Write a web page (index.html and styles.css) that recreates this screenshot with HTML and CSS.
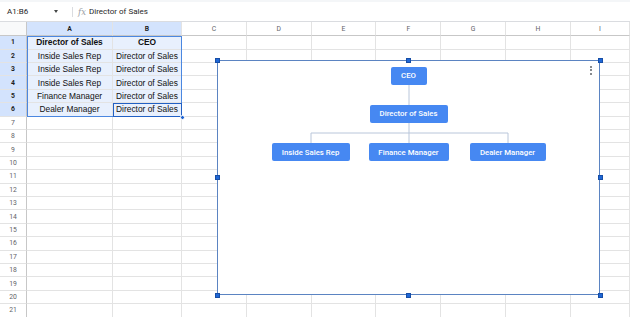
FILE: index.html
```html
<!DOCTYPE html>
<html>
<head>
<meta charset="utf-8">
<link rel="stylesheet" href="styles.css">
</head>
<body>
<div class="app">
  <div class="fbar">
    <div class="namebox"><span class="nb-text">A1:B6</span><span class="caret"></span></div>
    <div class="sep"></div>
    <span class="fx">fx</span>
    <span class="formula">Director of Sales</span>
  </div>
  <div class="sheet">
    <div class="row head"><i class="corner"></i><i class="sel">A</i><i class="sel">B</i><i>C</i><i>D</i><i>E</i><i>F</i><i>G</i><i>H</i><i>I</i></div>
    <div class="row"><i class="rh sel">1</i><i class="s b">Director of Sales</i><i class="s b">CEO</i><i></i><i></i><i></i><i></i><i></i><i></i><i></i></div>
    <div class="row"><i class="rh sel">2</i><i class="s">Inside Sales Rep</i><i class="s">Director of Sales</i><i></i><i></i><i></i><i></i><i></i><i></i><i></i></div>
    <div class="row"><i class="rh sel">3</i><i class="s">Inside Sales Rep</i><i class="s">Director of Sales</i><i></i><i></i><i></i><i></i><i></i><i></i><i></i></div>
    <div class="row"><i class="rh sel">4</i><i class="s">Inside Sales Rep</i><i class="s">Director of Sales</i><i></i><i></i><i></i><i></i><i></i><i></i><i></i></div>
    <div class="row"><i class="rh sel">5</i><i class="s">Finance Manager</i><i class="s">Director of Sales</i><i></i><i></i><i></i><i></i><i></i><i></i><i></i></div>
    <div class="row"><i class="rh sel">6</i><i class="s">Dealer Manager</i><i class="s">Director of Sales</i><i></i><i></i><i></i><i></i><i></i><i></i><i></i></div>
    <div class="row"><i class="rh">7</i><i></i><i></i><i></i><i></i><i></i><i></i><i></i><i></i><i></i></div>
    <div class="row"><i class="rh">8</i><i></i><i></i><i></i><i></i><i></i><i></i><i></i><i></i><i></i></div>
    <div class="row"><i class="rh">9</i><i></i><i></i><i></i><i></i><i></i><i></i><i></i><i></i><i></i></div>
    <div class="row"><i class="rh">10</i><i></i><i></i><i></i><i></i><i></i><i></i><i></i><i></i><i></i></div>
    <div class="row"><i class="rh">11</i><i></i><i></i><i></i><i></i><i></i><i></i><i></i><i></i><i></i></div>
    <div class="row"><i class="rh">12</i><i></i><i></i><i></i><i></i><i></i><i></i><i></i><i></i><i></i></div>
    <div class="row"><i class="rh">13</i><i></i><i></i><i></i><i></i><i></i><i></i><i></i><i></i><i></i></div>
    <div class="row"><i class="rh">14</i><i></i><i></i><i></i><i></i><i></i><i></i><i></i><i></i><i></i></div>
    <div class="row"><i class="rh">15</i><i></i><i></i><i></i><i></i><i></i><i></i><i></i><i></i><i></i></div>
    <div class="row"><i class="rh">16</i><i></i><i></i><i></i><i></i><i></i><i></i><i></i><i></i><i></i></div>
    <div class="row"><i class="rh">17</i><i></i><i></i><i></i><i></i><i></i><i></i><i></i><i></i><i></i></div>
    <div class="row"><i class="rh">18</i><i></i><i></i><i></i><i></i><i></i><i></i><i></i><i></i><i></i></div>
    <div class="row"><i class="rh">19</i><i></i><i></i><i></i><i></i><i></i><i></i><i></i><i></i><i></i></div>
    <div class="row"><i class="rh">20</i><i></i><i></i><i></i><i></i><i></i><i></i><i></i><i></i><i></i></div>
    <div class="row"><i class="rh">21</i><i></i><i></i><i></i><i></i><i></i><i></i><i></i><i></i><i></i></div>

    <div class="range"></div>
    <div class="active"><span class="fill-handle"></span></div>

    <div class="chart">
      <svg class="links" width="383" height="235" viewBox="0 0 383 235">
        <path d="M192 24 V45 M192 63 V73 M94 73 H291 M94 73 V83 M192 73 V83 M291 73 V83" fill="none" stroke="#b9c6da" stroke-width="1"/>
      </svg>
      <div class="node n-ceo">CEO</div>
      <div class="node n-dir">Director of Sales</div>
      <div class="node n-isr">Inside Sales Rep</div>
      <div class="node n-fin">Finance Manager</div>
      <div class="node n-dea">Dealer Manager</div>
      <div class="kebab"><span></span><span></span><span></span></div>
      <span class="h h-tl"></span><span class="h h-tm"></span><span class="h h-tr"></span>
      <span class="h h-ml"></span><span class="h h-mr"></span>
      <span class="h h-bl"></span><span class="h h-bm"></span><span class="h h-br"></span>
    </div>
  </div>
</div>
</body>
</html>
```

FILE: styles.css
```css
* { box-sizing: border-box; }
html, body { margin: 0; padding: 0; background: #fff; }
body { width: 630px; height: 317px; overflow: hidden; font-family: Roboto, "Liberation Sans", sans-serif; }

.app { width: 630px; }

.fbar {
  height: 21px;
  display: flex;
  align-items: center;
  border-top: 2px solid #f4f6f8;
  color: #1f1f1f;
}
.namebox { width: 72px; display: flex; align-items: center; padding-left: 7px; }
.nb-text { font-size: 8px; width: 47px; }
.caret {
  width: 0; height: 0;
  border-left: 2.5px solid transparent;
  border-right: 2.5px solid transparent;
  border-top: 3px solid #444746;
}
.sep { width: 1px; height: 10px; background: #dadce0; margin-right: 5px; }
.fx { font-family: "DejaVu Serif", serif; font-style: italic; font-size: 8.5px; color: #9aa0a6; width: 11px; }
.formula { font-size: 8px; color: #1f1f1f; }

.sheet { position: relative; }

.row {
  display: grid;
  grid-template-columns: 27px 86px 69px repeat(6, 64.8px) 1fr;
  height: 13.4px;
}
.row i {
  font-style: normal;
  border-right: 1px solid #e3e3e3;
  border-bottom: 1px solid #e3e3e3;
  display: flex;
  align-items: center;
  justify-content: center;
  font-family: "Liberation Sans", Arial, sans-serif;
  font-size: 8.4px;
  color: #111;
  white-space: nowrap;
  overflow: hidden;
}
.row i.s { background: #e8f0fd; }
.row i.b { font-weight: bold; }
.row i.rh {
  font-family: Roboto, sans-serif;
  font-size: 6.8px;
  color: #5f6368;
  border-right: 1px solid #c7c7c7;
}
.row i.rh.sel { background: #d3e3fd; color: #1f1f1f; font-weight: 700; }

.row.head { height: 15.3px; border-top: 1px solid #dadce0; }
.row.head i {
  font-family: Roboto, sans-serif;
  font-size: 6.8px;
  color: #5f6368;
  border-bottom: 1px solid #c7c7c7;
  border-right: 1px solid #e3e3e3;
}
.row.head i.sel { background: #d3e3fd; color: #1f1f1f; font-weight: 700; }
.row.head i.corner { background: #f8f9fa; border-right: 1px solid #c7c7c7; border-bottom: 1px solid #c7c7c7; }

.range {
  position: absolute;
  left: 26.5px; top: 14.8px;
  width: 155.5px; height: 81px;
  border: 1px solid #4b87e0;
  pointer-events: none;
}
.active {
  position: absolute;
  left: 112.5px; top: 82px;
  width: 69.5px; height: 14.2px;
  border: 1.5px solid #2160c4;
}
.fill-handle {
  position: absolute;
  right: -3.5px; bottom: -3.5px;
  width: 5px; height: 5px;
  border-radius: 50%;
  background: #1f63d0;
  border: 0.5px solid #fff;
}

.chart {
  position: absolute;
  left: 217px; top: 39px;
  width: 383px; height: 235px;
  background: #fff;
  border: 1.5px solid #5b84c2;
}
.links { position: absolute; left: -1.5px; top: -1.5px; }

.node {
  position: absolute;
  height: 18px;
  background: #4688f2;
  color: #fff;
  font-family: Roboto, sans-serif;
  font-weight: 500;
  font-size: 7.8px;
  border-radius: 2px;
  display: flex;
  align-items: center;
  justify-content: center;
  white-space: nowrap;
}
.n-ceo { left: 172.5px; top: 5.5px; width: 36px; }
.n-dir { left: 151.5px; top: 43.5px; width: 78px; }
.n-isr { left: 53.5px; top: 82px; width: 78px; }
.n-fin { left: 150.5px; top: 82px; width: 80px; }
.n-dea { left: 251.5px; top: 82px; width: 76px; }

.kebab {
  position: absolute;
  left: 371.5px; top: 4.5px;
  display: flex; flex-direction: column; gap: 1.6px;
}
.kebab span { width: 2.2px; height: 2.2px; border-radius: 50%; background: #5f6368; }

.h {
  position: absolute;
  width: 5px; height: 5px;
  background: #1f67d6;
  border: 0.5px solid #174ea6;
}
.h-tl { left: -3.5px; top: -3.5px; }
.h-tm { left: 188px; top: -3.5px; }
.h-tr { right: -3.5px; top: -3.5px; }
.h-ml { left: -3.5px; top: 113.5px; }
.h-mr { right: -3.5px; top: 113.5px; }
.h-bl { left: -3.5px; bottom: -3.5px; }
.h-bm { left: 188px; bottom: -3.5px; }
.h-br { right: -3.5px; bottom: -3.5px; }
```
